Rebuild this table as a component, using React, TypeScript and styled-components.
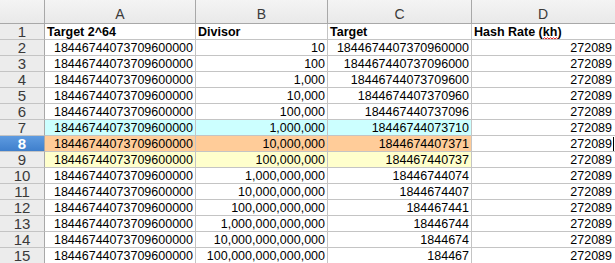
import React from 'react';
import styled, { createGlobalStyle, css } from 'styled-components';

const GlobalStyle = createGlobalStyle`
	html, body {
		margin: 0;
		padding: 0;
		background: #ffffff;
		overflow: hidden;
	}
`;

const Sheet = styled.div`
	display: grid;
	grid-template-columns: 45px 151px 132px 144px 150px;
	grid-template-rows: 24px;
	grid-auto-rows: 16px;
	width: 615px;
	height: 263px;
	overflow: hidden;
	font-family: 'Liberation Sans', Arial, sans-serif;
	font-size: 12.5px;
	color: #000;
`;

const ColHead = styled.div<{ $last?: boolean }>`
	box-sizing: border-box;
	display: flex;
	align-items: center;
	justify-content: center;
	padding-top: 4px;
	padding-right: ${({ $last }) => ($last ? '7px' : '0')};
	background: linear-gradient(#f4f4f4, #e9e9e9);
	border-right: 1px solid #a8a8a8;
	border-bottom: 1px solid #a8a8a8;
	font-size: 14px;
	color: #3a3a3a;
`;

const RowHead = styled.div<{ $active?: boolean }>`
	box-sizing: border-box;
	display: flex;
	align-items: center;
	justify-content: center;
	background: #ececec;
	border-right: 1px solid #a8a8a8;
	border-bottom: 1px solid #c4c4c4;
	font-size: 15px;
	line-height: 15px;
	color: #3a3a3a;
	${({ $active }) =>
		$active &&
		css`
			background: linear-gradient(#5e9be0, #3f7fcc);
			color: #ffffff;
			font-weight: bold;
		`}
`;

/* last column runs past the window; extra right padding keeps the
   right-aligned numbers ending where the reference has them */
const Cell = styled.div<{ $bg?: string; $right?: boolean; $bold?: boolean; $last?: boolean }>`
	box-sizing: border-box;
	position: relative;
	display: flex;
	align-items: center;
	justify-content: ${({ $right }) => ($right ? 'flex-end' : 'flex-start')};
	padding: 1px ${({ $last }) => ($last ? '9px' : '2px')} 0 2px;
	background: ${({ $bg }) => $bg || '#ffffff'};
	border-right: 1px solid #c4c4c4;
	border-bottom: 1px solid #c4c4c4;
	white-space: nowrap;
	overflow: ${({ $last }) => ($last ? 'visible' : 'hidden')};
	font-weight: ${({ $bold }) => ($bold ? 'bold' : 'normal')};
`;

const Squiggle = styled.span`
	position: relative;
	display: inline-block;

	svg {
		position: absolute;
		left: 0;
		bottom: -1px;
	}
`;

const Caret = styled.span`
	position: absolute;
	right: 7px;
	top: 1px;
	width: 1px;
	height: 14px;
	background: #000;
`;

const rowColors: Record<number, string> = {
	7: '#ccffff',
	8: '#ffcc99',
	9: '#ffffcc',
};

const divisors = [
	'10',
	'100',
	'1,000',
	'10,000',
	'100,000',
	'1,000,000',
	'10,000,000',
	'100,000,000',
	'1,000,000,000',
	'10,000,000,000',
	'100,000,000,000',
	'1,000,000,000,000',
	'10,000,000,000,000',
	'100,000,000,000,000',
];

const targets = [
	'1844674407370960000',
	'184467440737096000',
	'18446744073709600',
	'1844674407370960',
	'184467440737096',
	'18446744073710',
	'1844674407371',
	'184467440737',
	'18446744074',
	'1844674407',
	'184467441',
	'18446744',
	'1844674',
	'184467',
];

function App() {
	return (
		<>
			<GlobalStyle />
			<Sheet>
				<ColHead />
				<ColHead>A</ColHead>
				<ColHead>B</ColHead>
				<ColHead>C</ColHead>
				<ColHead $last>D</ColHead>

				<RowHead>1</RowHead>
				<Cell $bold>Target 2^64</Cell>
				<Cell $bold>Divisor</Cell>
				<Cell $bold>Target</Cell>
				<Cell $bold $last>
					Hash Rate (
					<Squiggle>
						kh
						<svg width="15" height="3" viewBox="0 0 15 3">
							<path d="M0 2 L1.5 0.7 L3 2 L4.5 0.7 L6 2 L7.5 0.7 L9 2 L10.5 0.7 L12 2 L13.5 0.7 L15 2" fill="none" stroke="#e02020" strokeWidth="1" />
						</svg>
					</Squiggle>
					)
				</Cell>

				{divisors.map((d, i) => {
					const row = i + 2;
					const bg = rowColors[row];
					return (
						<React.Fragment key={row}>
							<RowHead $active={row === 8}>{row}</RowHead>
							<Cell $right $bg={bg}>
								18446744073709600000
							</Cell>
							<Cell $right $bg={bg}>
								{d}
							</Cell>
							<Cell $right $bg={bg}>
								{targets[i]}
							</Cell>
							<Cell $right $last>
								272089
								{row === 8 && <Caret />}
							</Cell>
						</React.Fragment>
					);
				})}
			</Sheet>
		</>
	);
}

export default App;
